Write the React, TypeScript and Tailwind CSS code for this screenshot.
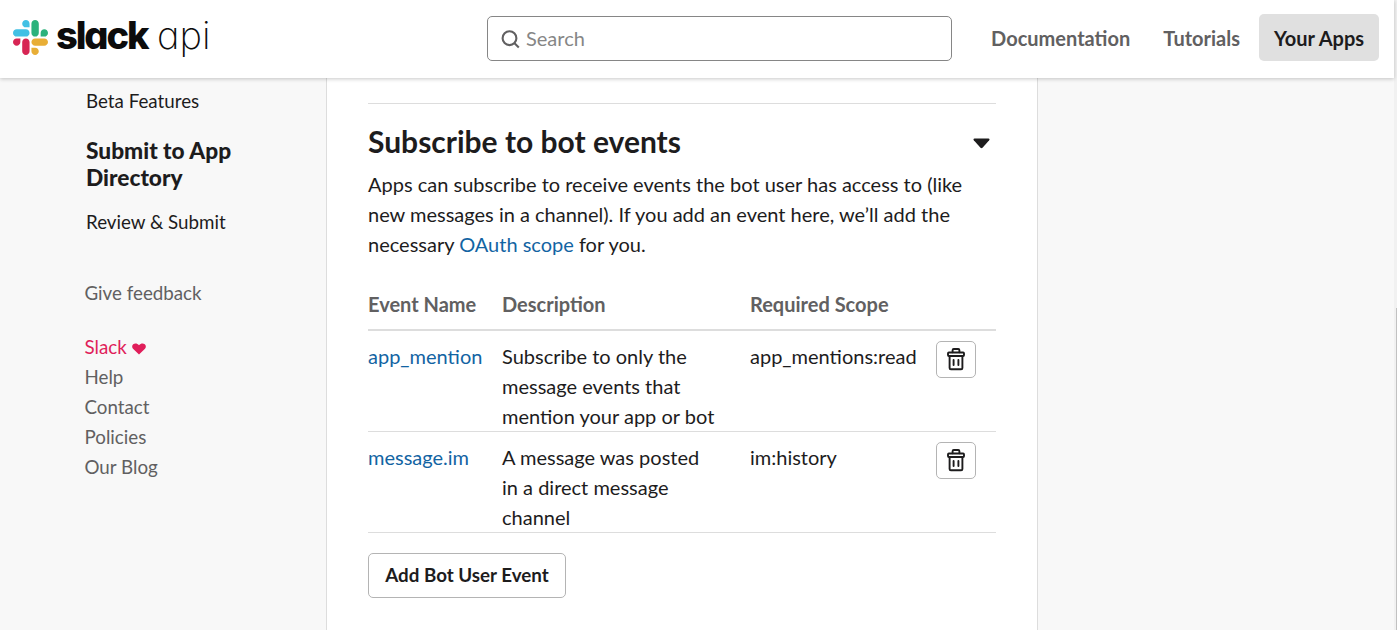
import React from "react";

function SlackMark() {
  return (
    <svg width="35" height="35" viewBox="0 0 122.8 122.8" className="block shrink-0">
      <path fill="#D72654" d="M25.8 77.6c0 7.1-5.8 12.9-12.9 12.9S0 84.7 0 77.6s5.8-12.9 12.9-12.9h12.9v12.9zM32.3 77.6c0-7.1 5.8-12.9 12.9-12.9s12.9 5.8 12.9 12.9v32.3c0 7.1-5.8 12.9-12.9 12.9s-12.9-5.8-12.9-12.9V77.6z" />
      <path fill="#42C0E4" d="M45.2 25.8c-7.1 0-12.9-5.8-12.9-12.9S38.1 0 45.2 0s12.9 5.8 12.9 12.9v12.9H45.2zM45.2 32.3c7.1 0 12.9 5.8 12.9 12.9s-5.8 12.9-12.9 12.9H12.9C5.8 58.1 0 52.3 0 45.2s5.8-12.9 12.9-12.9h32.3z" />
      <path fill="#2BB27B" d="M97 45.2c0-7.1 5.8-12.9 12.9-12.9s12.9 5.8 12.9 12.9-5.8 12.9-12.9 12.9H97V45.2zM90.5 45.2c0 7.1-5.8 12.9-12.9 12.9s-12.9-5.8-12.9-12.9V12.9C64.7 5.8 70.5 0 77.6 0s12.9 5.8 12.9 12.9v32.3z" />
      <path fill="#E8AE36" d="M77.6 97c7.1 0 12.9 5.8 12.9 12.9s-5.8 12.9-12.9 12.9-12.9-5.8-12.9-12.9V97h12.9zM77.6 90.5c-7.1 0-12.9-5.8-12.9-12.9s5.8-12.9 12.9-12.9h32.3c7.1 0 12.9 5.8 12.9 12.9s-5.8 12.9-12.9 12.9H77.6z" />
    </svg>
  );
}

function Trash() {
  return (
    <svg width="20" height="24" viewBox="0 0 20 24" fill="none" stroke="#1d1c1d" strokeWidth="1.9" strokeLinejoin="round" strokeLinecap="round">
      <path d="M6.6 5.2V3.2a1.2 1.2 0 0 1 1.2-1.2h4.4a1.2 1.2 0 0 1 1.2 1.2v2" />
      <rect x="2" y="5.5" width="16" height="3.5" rx="0.9" />
      <path d="M3.6 9.3v11.7a1.3 1.3 0 0 0 1.3 1.3h10.2a1.3 1.3 0 0 0 1.3-1.3v-11.7" />
      <path d="M7.6 13v5M12.4 13v5" />
    </svg>
  );
}

const events = [
  { name: "app_mention", lines: ["Subscribe to only the", "message events that", "mention your app or bot"], scope: "app_mentions:read" },
  { name: "message.im", lines: ["A message was posted", "in a direct message", "channel"], scope: "im:history" },
];

const cols = "grid grid-cols-[134px_248px_186px_1fr]";

export default function App() {
  return (
    <div className="h-[630px] w-full overflow-hidden bg-[#f8f8f8] font-['Lato',sans-serif] text-[20px] leading-[30px] text-[#1d1c1d] flex">
      <div className="flex min-w-0 flex-1 flex-col">
        <header className="relative z-10 flex h-[78px] shrink-0 items-start bg-white shadow-[0_1px_4px_rgba(0,0,0,0.22)]">
          <a className="flex w-[487px] items-start pl-[13px] pt-[20px]">
            <SlackMark />
            <span className="ml-[8px] -mt-[7px] flex whitespace-nowrap font-['Inter',sans-serif] text-[38px] leading-[44px] text-[#0c0c0c] [font-feature-settings:'cv11']">
              <span className="w-[101px] font-extrabold tracking-[-2.1px]">slack</span>
              <span className="font-extralight tracking-[0px]">api</span>
            </span>
          </a>
          <div className="mt-[16px] flex h-[45px] w-[465px] items-center rounded-[5px] border border-[#868686] bg-white pl-[13px]">
            <svg width="20" height="20" viewBox="0 0 20 20" fill="none" stroke="#616061" strokeWidth="2.1">
              <circle cx="8.5" cy="9.2" r="6.9" />
              <path d="M13.3 14.1l4.5 4.3" />
            </svg>
            <span className="ml-[5px] pb-[2px] text-[#868686]">Search</span>
          </div>
          <nav className="ml-auto mt-[14px] flex h-[47px] items-center pr-[15px] font-bold text-[#616061]">
            <a className="mr-[33px]">Documentation</a>
            <a className="mr-[19px]">Tutorials</a>
            <a className="flex h-[47px] w-[120px] items-center justify-center rounded-[5px] bg-[#e0e0e0] text-[#1d1c1d]">Your Apps</a>
          </nav>
        </header>
        <div className="flex min-h-0 flex-1">
          <aside className="w-[326px] shrink-0 pl-[86px] pt-[8px] text-[18.75px]">
            <div>Beta Features</div>
            <h2 className="mt-[21px] text-[22.7px] font-black leading-[27px]">Submit to App<br />Directory</h2>
            <div className="mt-[16px]">Review &amp; Submit</div>
            <div className="-ml-[1.5px] text-[#616061]">
              <div className="mt-[41px]">Give feedback</div>
              <div className="mt-[24px] flex items-center text-[#e01e5a]">
                Slack
                <svg className="ml-[5px] mt-[3px]" width="14" height="12" viewBox="0 0 14 12" fill="currentColor">
                  <path d="M7 11.6 1 5.8C-.3 4.400 0 2.200 1.200 1.200 3 0 5.400.300 7 2.300 8.600.300 11 0 12.800 1.200 14 2.200 14.300 4.400 13 5.800z" />
                </svg>
              </div>
              <div>Help</div>
              <div>Contact</div>
              <div>Policies</div>
              <div>Our Blog</div>
            </div>
          </aside>
          <main className="w-[712px] shrink-0 border-x border-[#dddddd] bg-white px-[41px] pt-[25px]">
            <section className="border-t border-[#dddddd]">
              <div className="mt-[17px] flex h-[40px] items-center justify-between pr-[6px]">
                <h1 className="text-[30px] font-bold leading-[40px]">Subscribe to bot events</h1>
                <svg className="mt-[4px]" width="17" height="11" viewBox="0 0 17 11" fill="#1d1c1d">
                  <path d="M1.5.5h14c1 0 1.3 1 .7 1.7L9.5 9.8c-.6.6-1.4.6-2 0L.8 2.2C.2 1.5.5.5 1.5.5z" />
                </svg>
              </div>
              <p className="mt-[8px] whitespace-nowrap">
                Apps can subscribe to receive events the bot user has access to (like<br />
                new messages in a channel). If you add an event here, we’ll add the<br />
                necessary <a className="text-[#1264a3]">OAuth scope</a> for you.
              </p>
              <div className={`${cols} mt-[30px] h-[42px] border-b-2 border-[#dddddd] font-bold text-[#616061]`}>
                <div>Event Name</div>
                <div>Description</div>
                <div>Required Scope</div>
              </div>
              {events.map((e) => (
                <div key={e.name} className={`${cols} h-[101px] border-b border-[#dddddd] pt-[10px] whitespace-nowrap`}>
                  <a className="text-[#1264a3]">{e.name}</a>
                  <div>{e.lines.map((l) => <div key={l}>{l}</div>)}</div>
                  <div>{e.scope}</div>
                  <button className="flex h-[37px] w-[40px] items-center justify-center rounded-[5px] border border-[#b4b4b4] bg-white pb-[2px]">
                    <Trash />
                  </button>
                </div>
              ))}
              <button className="mt-[20px] h-[45px] w-[198px] rounded-[5px] border border-[#b4b4b4] bg-white pb-[2px] text-[18.75px] font-bold">Add Bot User Event</button>
            </section>
          </main>
        </div>
      </div>
      <div className="flex w-[3px] shrink-0 flex-col bg-[#f1f1f1]">
        <div className="mt-[308px] ml-[2px] flex-1 bg-[#c1c1c1]" />
      </div>
    </div>
  );
}
